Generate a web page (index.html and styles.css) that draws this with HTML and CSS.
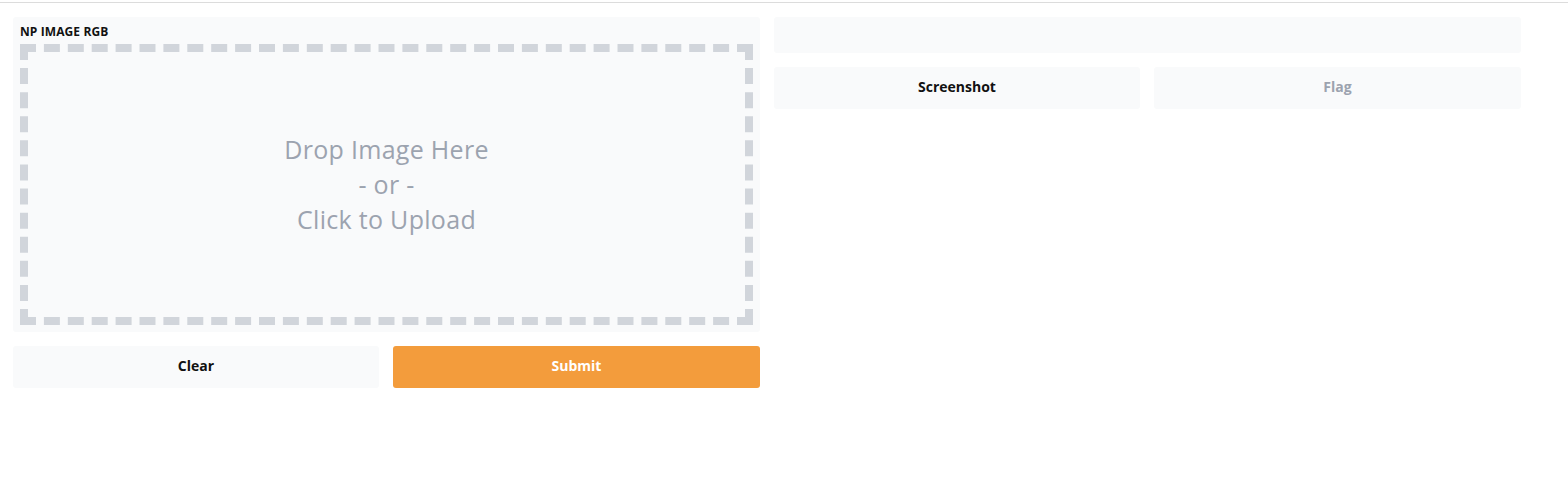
FILE: index.html
```html
<!DOCTYPE html>
<html>
<head>
<meta charset="utf-8">
<link rel="stylesheet" href="styles.css">
</head>
<body>
<div class="topline"></div>
<div class="container">
  <div class="column">
    <div class="panel">
      <div class="label">NP IMAGE RGB</div>
      <div class="drop">
        <div class="drop-text">Drop Image Here<br>- or -<br>Click to Upload</div>
      </div>
    </div>
    <div class="btn-row">
      <div class="btn">Clear</div>
      <div class="btn primary">Submit</div>
    </div>
  </div>
  <div class="column">
    <div class="output-box"></div>
    <div class="btn-row">
      <div class="btn">Screenshot</div>
      <div class="btn muted">Flag</div>
    </div>
  </div>
</div>
</body>
</html>
```
FILE: styles.css
```css
html, body {
  margin: 0;
  padding: 0;
  background: #ffffff;
  font-family: "Open Sans", "Noto Sans", sans-serif;
}
.topline {
  height: 2px;
  border-bottom: 1px solid #dcdcdc;
}
.container {
  display: flex;
  gap: 14px;
  padding: 14px 0 0 13px;
  width: 1508px;
}
.column {
  flex: 1;
  display: flex;
  flex-direction: column;
  gap: 14px;
}
.panel {
  background: #f9fafb;
  border-radius: 3px;
  height: 315px;
  padding: 7px;
  box-sizing: border-box;
  display: flex;
  flex-direction: column;
}
.label {
  font-size: 12px;
  font-weight: 700;
  color: #111;
  height: 20px;
  line-height: 16px;
  letter-spacing: 0.1px;
}
.drop {
  flex: 1;
  border: 8px dashed #d1d5db;
  display: flex;
  align-items: center;
  justify-content: center;
}
.drop-text {
  text-align: center;
  font-size: 25px;
  line-height: 35px;
  color: #9ca3af;
  letter-spacing: 0.3px;
}
.btn-row {
  display: grid;
  grid-template-columns: 366px 367px;
  gap: 14px;
}
.btn {
  height: 42px;
  line-height: 40px;
  text-align: center;
  background: #f9fafb;
  border-radius: 3px;
  font-size: 14px;
  font-weight: 700;
  color: #111;
}
.btn.primary {
  background: #f39c3c;
  color: #ffffff;
}
.btn.muted {
  color: #9ca3af;
}
.output-box {
  height: 36px;
  background: #f9fafb;
  border-radius: 3px;
}
```
